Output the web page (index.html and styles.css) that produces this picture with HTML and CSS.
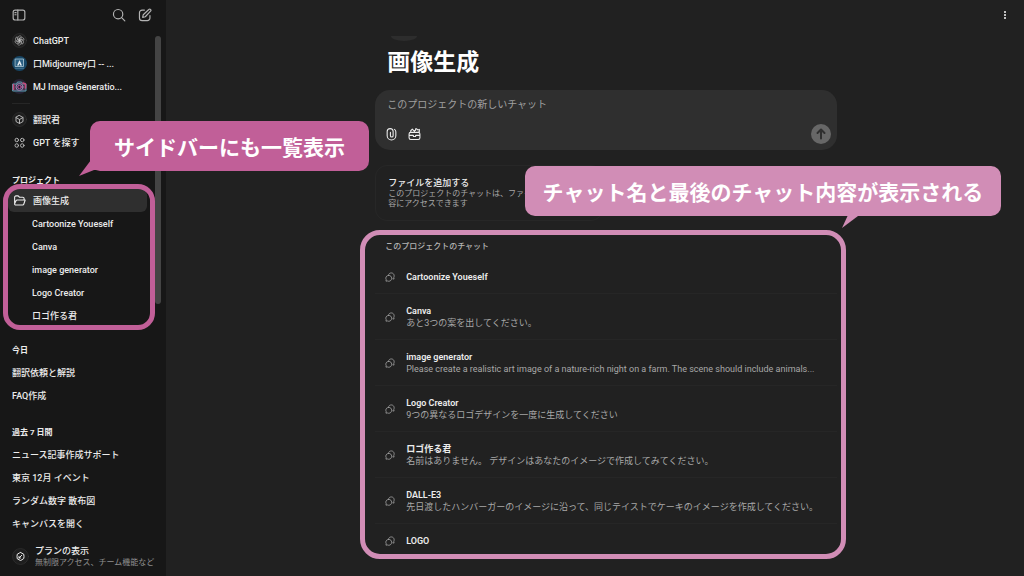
FILE: index.html
```html
<!DOCTYPE html>
<html lang="ja">
<head>
<meta charset="utf-8">
<title>画像生成</title>
<link rel="stylesheet" href="styles.css">
</head>
<body>
<svg class="defs" aria-hidden="true">
  <symbol id="chats" viewBox="0 0 24 24"><path d="M9 8c-4 0-7 3-7 7 0 1.300.300 2.500.900 3.500L2.300 22l3.500-.500C6.800 22 8 22.200 9 22.200c4 0 7-3.200 7-7.200S13 8 9 8zM9 5.500c1.200-2 3.400-3.300 6-3.300 4 0 7 3 7 7 0 1.300-.300 2.500-.900 3.500l.600 4.300-3-.600"/></symbol>
</svg>
<div class="app">
  <aside class="sidebar">
    <header class="bar">
      <button class="icon-btn" aria-label="サイドバーを閉じる"><svg class="icon" viewBox="0 0 24 24"><rect x="2" y="3.500" width="20" height="17" rx="3.500"/><path d="M10 3.500v17M5 8h2M5 11.500h2"/></svg></button>
      <span class="bar-right">
        <button class="icon-btn" aria-label="検索"><svg class="icon" viewBox="0 0 24 24"><circle cx="10.500" cy="10.500" r="8"/><path d="M16.500 16.500L22 22"/></svg></button>
        <button class="icon-btn" aria-label="新しいチャット"><svg class="icon" viewBox="0 0 24 24"><path d="M11 3.500H7A4.500 4.500 0 0 0 2.500 8v9A4.500 4.500 0 0 0 7 21.500h9a4.500 4.500 0 0 0 4.500-4.500v-4M18.500 2.500a2.100 2.100 0 0 1 3 3L12.500 15 8 16l1-4.500z"/></svg></button>
      </span>
    </header>
    <nav class="nav">
      <a class="row" href="#"><svg class="avatar" viewBox="0 0 30 30"><circle class="disc" cx="15" cy="15" r="14"/><g class="knot"><path id="petal" d="M12 13.300V9.500a3.800 3.800 0 0 1 7-2l-4.500 2.600v5.200l3.500 2"/><use href="#petal" transform="rotate(60 15 15)"/><use href="#petal" transform="rotate(120 15 15)"/><use href="#petal" transform="rotate(180 15 15)"/><use href="#petal" transform="rotate(240 15 15)"/><use href="#petal" transform="rotate(300 15 15)"/></g></svg><span>ChatGPT</span></a>
      <a class="row" href="#"><svg class="avatar" viewBox="0 0 30 30"><g stroke="none"><circle cx="15" cy="15" r="15" fill="#174665"/><path d="M7 6h16v15H7z" fill="#2b6083"/><path d="M10 19l5-11 5 11z" fill="#e5edf1"/><path d="M13.500 19l1.500-4 1.500 4z" fill="#174665"/></g><path d="M7 6h16v15H7z" stroke="#b4cddb" stroke-width="1.500"/><path d="M7 24.500h16" stroke="#5d8ba6" stroke-width="1.500"/></svg><span>口Midjourney口 -- ...</span></a>
      <a class="row" href="#"><svg class="avatar" viewBox="0 0 30 30"><circle cx="15" cy="15" r="15" fill="#272335" stroke="none"/><path d="M2 10h7l2-4h8l2 4h7v14H2z" fill="#48334f" stroke="#579cae" stroke-width="2"/><path d="M3 11v10M22 8l5 2v8" stroke="#c74b7c" stroke-width="3"/><circle cx="15" cy="16" r="7" fill="#293656" stroke="#9b88af" stroke-width="2"/><circle cx="15" cy="16" r="3.500" fill="#20142f" stroke="#c55a9b" stroke-width="2"/></svg><span>MJ Image Generatio...</span></a>
      <hr class="rule">
      <a class="row" href="#"><svg class="avatar" viewBox="0 0 30 30"><circle class="disc" cx="15" cy="15" r="14"/><path class="cube" d="M15 7l7 4v8l-7 4-7-4v-8zM8 11l7 4 7-4M15 15v8"/></svg><span>翻訳君</span></a>
      <a class="row" href="#"><svg class="avatar" viewBox="0 0 30 30"><g class="cube"><circle cx="9.500" cy="10" r="3.500"/><circle cx="20.500" cy="10" r="3.500"/><circle cx="9.500" cy="21" r="3.500"/><circle cx="20.500" cy="21" r="3.500"/></g></svg><span>GPT を探す</span></a>
      <section class="group projects">
        <h2 class="label">プロジェクト</h2>
        <div class="project-list">
          <a class="row selected" href="#"><svg class="folder" viewBox="0 0 24 24"><path d="M3 19V6a2.500 2.500 0 0 1 2.500-2.500h4L12 6h6a2.500 2.500 0 0 1 2.500 2.500V11M3 18l2.500-5.500A2.500 2.500 0 0 1 8 11h14.500L20 18.500a2.500 2.500 0 0 1-2.500 1.700H5A2 2 0 0 1 3 18z"/></svg><span>画像生成</span></a>
          <a class="row child" href="#">Cartoonize Youeself</a>
          <a class="row child" href="#">Canva</a>
          <a class="row child" href="#">image generator</a>
          <a class="row child" href="#">Logo Creator</a>
          <a class="row child" href="#">ロゴ作る君</a>
          <div class="outline"></div>
        </div>
        <p class="callout callout-side">サイドバーにも一覧表示<svg class="tail tail-side" viewBox="0 0 24 20"><path d="M12 0v2L0 18l15-6h9V0z"/></svg></p>
      </section>
      <section class="group">
        <h2 class="label">今日</h2>
        <a class="row" href="#">翻訳依頼と解説</a>
        <a class="row" href="#">FAQ作成</a>
      </section>
      <section class="group">
        <h2 class="label">過去 7 日間</h2>
        <a class="row" href="#">ニュース記事作成サポート</a>
        <a class="row" href="#">東京 12月 イベント</a>
        <a class="row" href="#">ランダム数字 散布図</a>
        <a class="row" href="#">キャンバスを開く</a>
      </section>
    </nav>
    <a class="plan" href="#">
      <svg class="plan-icon" viewBox="0 0 34 34"><circle class="disc" cx="17" cy="17" r="16"/><path d="M17 9l3 1.500 3.500 2 .500 4.500-.500 4-3.500 2.500L17 25l-3-1.500-3.500-2L10 17l.500-4.500 3.500-2zM14 20l5.500-5.500M14 17v3h3"/></svg>
      <span><strong>プランの表示</strong><small>無制限アクセス、チーム機能など</small></span>
    </a>
    <div class="thumb"></div>
  </aside>

  <main class="main">
    <header class="top"><button class="icon-btn" aria-label="メニュー"><svg class="dots" viewBox="0 0 4 10"><path d="M1 1h2v2H1zM1 4h2v2H1zM1 7h2v2H1z"/></svg></button></header>
    <div class="column">
      <div class="badge"></div>
      <h1>画像生成</h1>
      <form class="composer">
        <input type="text" aria-label="メッセージ" placeholder="このプロジェクトの新しいチャット">
        <div class="tools">
          <button type="button" class="icon-btn" aria-label="添付"><svg class="tool" viewBox="0 0 24 24"><path d="M20 9v6a8 8 0 0 1-16 0V7.500a5.500 5.500 0 0 1 11 0V15a2.500 2.500 0 0 1-5 0V9M17.500 3.500A5 5 0 0 1 20 8v1"/></svg></button>
          <button type="button" class="icon-btn" aria-label="ツール"><svg class="tool" viewBox="0 0 24 24"><path d="M2 12a3 3 0 0 1 3-3h14a3 3 0 0 1 3 3v7a3 3 0 0 1-3 3H5a3 3 0 0 1-3-3zM2 14.500h7M15 14.500h7M10 14.500v2h4v-2M5 9V6l3-3 4 4M12 9V6l2-1V2.500h2l2 2 3-1v4l-2 1.500"/></svg></button>
          <button type="button" class="send" aria-label="送信"><svg viewBox="0 0 20 20"><path d="M10 14.500V6M6.500 9L10 5.500 13.500 9"/></svg></button>
        </div>
      </form>
      <section class="files">
        <h2>ファイルを追加する</h2>
        <p>このプロジェクトのチャットは、ファイルの内<br>容にアクセスできます</p>
      </section>
      <section class="chats">
        <h2>このプロジェクトのチャット</h2>
        <ul>
          <li class="single"><a href="#"><svg class="chat-icon"><use href="#chats"/></svg><span><strong>Cartoonize Youeself</strong></span></a></li>
          <li><a href="#"><svg class="chat-icon"><use href="#chats"/></svg><span><strong>Canva</strong><small>あと3つの案を出してください。</small></span></a></li>
          <li><a href="#"><svg class="chat-icon"><use href="#chats"/></svg><span><strong>image generator</strong><small>Please create a realistic art image of a nature-rich night on a farm. The scene should include animals...</small></span></a></li>
          <li><a href="#"><svg class="chat-icon"><use href="#chats"/></svg><span><strong>Logo Creator</strong><small>9つの異なるロゴデザインを一度に生成してください</small></span></a></li>
          <li><a href="#"><svg class="chat-icon"><use href="#chats"/></svg><span><strong>ロゴ作る君</strong><small>名前はありません。 デザインはあなたのイメージで作成してみてください。</small></span></a></li>
          <li><a href="#"><svg class="chat-icon"><use href="#chats"/></svg><span><strong>DALL-E3</strong><small>先日渡したハンバーガーのイメージに沿って、同じテイストでケーキのイメージを作成してください。</small></span></a></li>
          <li class="single"><a href="#"><svg class="chat-icon"><use href="#chats"/></svg><span><strong>LOGO</strong></span></a></li>
        </ul>
        <div class="outline"></div>
        <p class="callout callout-main">チャット名と最後のチャット内容が表示される<svg class="tail tail-main" viewBox="0 0 16 14"><path d="M6 0L0 13l16-12V0z"/></svg></p>
      </section>
    </div>
  </main>
</div>
</body>
</html>
```
FILE: styles.css
```css
* { box-sizing: border-box; }
body, h1, h2, p, ul { margin: 0; padding: 0; }
body {
  background: #212121;
  color: #ececec;
  font: 500 9px/12px Roboto, "Noto Sans CJK JP", sans-serif;
}
a { color: inherit; text-decoration: none; }
ul { list-style: none; }
svg { fill: none; stroke: currentColor; stroke-width: 2; stroke-linecap: round; stroke-linejoin: round; flex: none; }
button { border: 0; padding: 0; background: none; color: inherit; display: flex; }
strong, small { display: block; font-size: 9px; white-space: nowrap; }
.defs { position: absolute; width: 0; height: 0; }
.app { display: flex; height: 100vh; overflow: hidden; }

.sidebar {
  position: relative;
  z-index: 1;
  flex: 0 0 165px;
  display: flex;
  flex-direction: column;
  background: #171717;
}
.bar { display: flex; flex: none; justify-content: space-between; align-items: center; height: 29px; padding: 0 14px 0 12px; color: #b4b4b4; }
.bar-right { display: flex; gap: 12px; }
.icon { width: 14px; height: 14px; }
.row { display: flex; align-items: center; height: 23px; padding: 0 12px; white-space: nowrap; }
.avatar { width: 15px; height: 15px; margin-right: 6px; }
.disc { fill: #1e1e1e; stroke: #3a3a3a; stroke-width: 1; }
.knot { stroke-width: 1; color: #d0d0d0; }
.cube { stroke-width: 2; color: #b4b4b4; }
.rule { width: 18px; margin: 5px 12px 4px; border: 0; border-top: 1px solid #262626; }
.group { padding-bottom: 18px; }
.group:last-child { padding-bottom: 0; }
.label { padding: 2px 12px; font: 700 8px/12px Roboto, "Noto Sans CJK JP", sans-serif; }
.projects { position: relative; padding: 19px 0 16px; }
.project-list { position: relative; }
.selected { margin: 0 19px 0 8px; padding: 0 5px; border-radius: 6px; background: #2f2f2f; }
.folder { width: 13px; height: 13px; margin-right: 7px; }
.child { padding-left: 32px; }
.label + .row { margin-top: 2px; }
.plan { display: flex; align-items: center; gap: 6px; margin-top: auto; padding: 0 12px 8px; }
.plan strong { font-weight: 500; }
.plan-icon { width: 17px; height: 17px; }
.plan small { font-size: 8px; line-height: 11px; font-weight: 400; color: #8f8f8f; }
.thumb { position: absolute; top: 36px; right: 5px; width: 6px; height: 268px; border-radius: 3px; background: #444; }

.outline { position: absolute; z-index: 2; pointer-events: none; border: 5px solid #c15f98; }
.projects .outline { inset: -5px 11px -3px 3px; border-radius: 17px; }
.callout {
  position: absolute;
  z-index: 3;
  padding: 10px 15px;
  border-radius: 10px;
  background: #c15f98;
  color: #fff;
  font: 700 21px/30px "Noto Sans CJK JP", sans-serif;
  text-align: center;
  white-space: nowrap;
}
.callout-side { top: -33px; left: 90px; padding: 10px 24px; }
.tail { position: absolute; fill: #c15f98; stroke: none; }
.tail-side { width: 24px; height: 20px; left: -11px; bottom: -7px; }

.main { flex: 1; min-width: 0; }
.top { display: flex; justify-content: flex-end; align-items: center; height: 29px; padding-right: 17px; }
.dots { width: 4px; height: 10px; fill: #c0c0c0; stroke: none; }
.column { max-width: 484px; margin: 0 auto; padding: 7px 0 0 22px; }
.badge { width: 26px; height: 5px; margin-left: 16px; border-radius: 0 0 50% 50% / 0 0 100% 100%; background: #2d2d2d; }
h1 { padding: 4px 12px 15px; font: 700 23px/30px "Noto Sans CJK JP", sans-serif; color: #fff; }
.composer { padding: 7px 6px 6px 12px; border-radius: 15px; background: #2f2f2f; }
.composer input { display: block; width: 100%; height: 15px; padding: 0; border: 0; outline: 0; background: none; color: #ececec; font: 400 10px/15px Roboto, "Noto Sans CJK JP", sans-serif; }
.composer input::placeholder { color: #a0a0a0; opacity: 1; }
.tools { display: flex; align-items: center; gap: 12px; padding-top: 12px; }
.tool { width: 13px; height: 14px; margin-left: -2px; }
.send { width: 20px; height: 20px; margin-left: auto; border-radius: 50%; background: #676767; color: #2f2f2f; }
.send svg { width: 20px; height: 20px; }
.files { width: 228px; margin-top: 15px; padding: 11px 12px; border: 1px solid #272727; border-radius: 12px; white-space: nowrap; }
.files h2 { font: 500 9px/12px Roboto, "Noto Sans CJK JP", sans-serif; }
.files p { font-size: 8px; font-weight: 400; line-height: 10px; color: #a8a8a8; }
.chats { position: relative; padding-top: 20px; }
.chats h2 { padding: 0 10px 7px; font: 500 8px/12px Roboto, "Noto Sans CJK JP", sans-serif; color: #b4b4b4; }
.chats li { height: 46px; border-bottom: 1px solid #262626; }
.chats .single { height: 34px; }
.chats li:last-child { border: 0; }
.chats a { display: flex; align-items: center; gap: 11px; height: 100%; padding: 0 10px; }
.chats strong { font-weight: 600; }
.chats small { font-weight: 400; color: #a8a8a8; }
.chat-icon { width: 10px; height: 10px; color: #a0a0a0; }
.chats .outline { inset: 9px -9px -1px -15px; border-color: #d18db6; border-radius: 20px; }
.callout-main { right: -164px; bottom: 342px; padding: 10px 18px; background: #d18db6; }
.tail-main { width: 16px; height: 14px; right: 143px; bottom: -13px; fill: #d18db6; }
```
